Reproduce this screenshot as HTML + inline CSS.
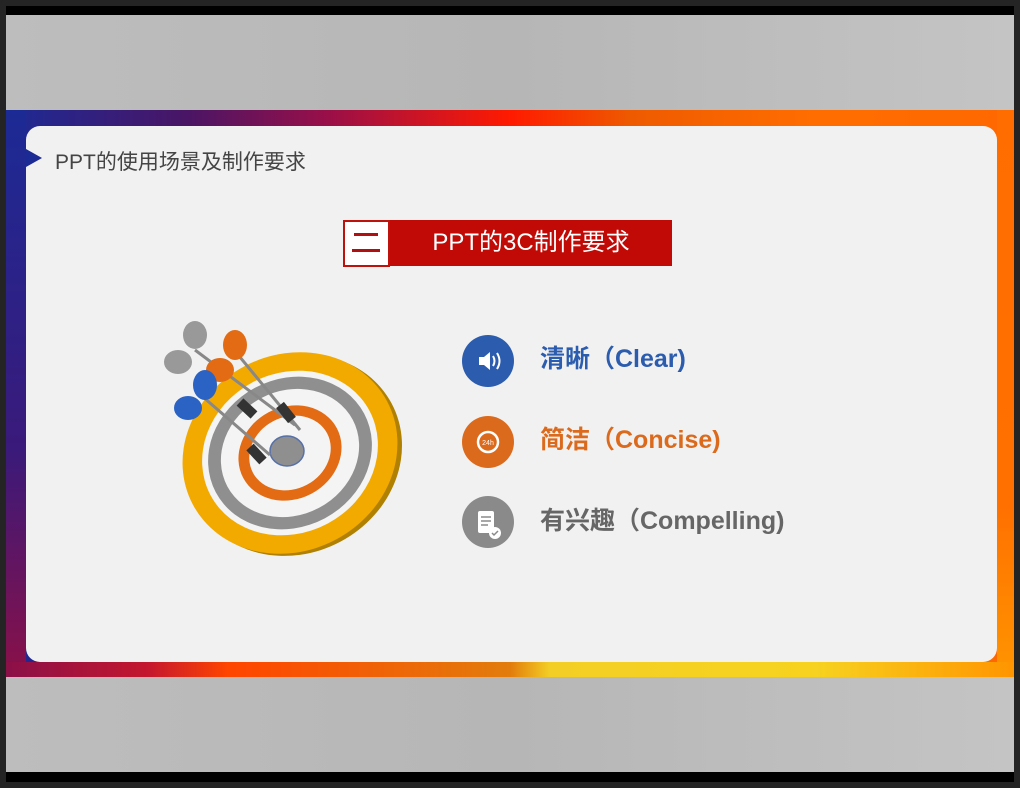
<!DOCTYPE html>
<html><head><meta charset="utf-8"><style>
body{margin:0;width:1020px;height:788px;background:#242424;position:relative;overflow:hidden;font-family:"Liberation Sans","Noto Sans CJK SC",sans-serif}
.blk{position:absolute;left:6px;width:1008px;background:#000}
.gray{position:absolute;left:6px;width:1008px;background:linear-gradient(90deg,#bdbdbd,#b6b6b6 50%,#c4c4c4)}
.slide{position:absolute;left:6px;top:110px;width:1008px;height:567px;background:linear-gradient(90deg,#1c2a95 0%,#4a1565 18%,#9a0f48 32%,#ff1a00 50%,#ee5a00 62%,#ff6d00 80%,#ff6800 100%)}
.bot{position:absolute;left:6px;top:662px;width:1008px;height:15px;background:linear-gradient(90deg,#8a1048 0%,#c4162e 14%,#ff4500 22%,#e27c0c 50%,#f3cf25 54%,#f7d320 80%,#ff9500 100%)}
.lft{position:absolute;left:6px;top:110px;width:20px;height:567px;background:linear-gradient(180deg,#1c2a95,#3a1a7a 60%,#8a1048)}
.rgt{position:absolute;left:997px;top:110px;width:17px;height:567px;background:linear-gradient(180deg,#ff6d00,#ff7000 70%,#ff9500)}
.card{position:absolute;left:26px;top:126px;width:971px;height:536px;background:#f1f1f1;border-radius:14px}
.tri{position:absolute;left:26px;top:149px;width:0;height:0;border-top:9px solid transparent;border-bottom:9px solid transparent;border-left:16px solid #1c2a95}
.t1{position:absolute;left:55px;top:146px;font-size:21px;color:#444}
.item{position:absolute;left:540px;font-size:25px;font-weight:bold}
.circ{position:absolute;left:462px;width:52px;height:52px;border-radius:50%}
</style></head><body>
<div class="blk" style="top:6px;height:9px"></div>
<div class="gray" style="top:15px;height:95px"></div>
<div class="slide"></div><div class="lft"></div><div class="rgt"></div><div class="bot"></div>
<div class="gray" style="top:677px;height:95px"></div>
<div class="blk" style="top:772px;height:10px"></div>
<div class="card"></div>
<div class="tri"></div>
<div class="t1">PPT的使用场景及制作要求</div>
<div style="position:absolute;left:343px;top:220px;width:43px;height:43px;border:2px solid #c0120c;background:#fff"></div>
<div style="position:absolute;left:354px;top:233px;width:24px;height:3px;background:#b01010"></div>
<div style="position:absolute;left:352px;top:249px;width:28px;height:3px;background:#b01010"></div>
<div style="position:absolute;left:390px;top:220px;width:282px;height:46px;background:#c10a06;color:#fff;font-size:24px;line-height:46px;text-align:center">PPT的3C制作要求</div>
<div class="circ" style="top:335px;background:#2b5cae"></div>
<div class="circ" style="top:416px;background:#dc6a1c"></div>
<div class="circ" style="top:496px;background:#8a8a8a"></div>
<svg style="position:absolute;left:462px;top:335px" width="52" height="213">
<g fill="#fff"><rect x="17" y="22" width="5" height="8"/><path d="M22 22 L28 17 L28 35 L22 30Z"/></g>
<g fill="none" stroke="#fff" stroke-width="2"><path d="M31 21 Q34 26 31 31"/><path d="M35 18 Q40 26 35 34"/></g>
<circle cx="26" cy="107" r="10" fill="none" stroke="#fff" stroke-width="2.5"/>
<text x="26" y="110" font-size="7" fill="#fff" text-anchor="middle" font-family="Liberation Sans">24h</text>
<rect x="16" y="176" width="16" height="22" rx="2" fill="#fff"/>
<g stroke="#8a8a8a" stroke-width="1.5"><line x1="19" y1="182" x2="29" y2="182"/><line x1="19" y1="186" x2="29" y2="186"/><line x1="19" y1="190" x2="26" y2="190"/></g>
<circle cx="33" cy="198" r="6" fill="#fff"/><path d="M30 198 l2 2 l4 -4" stroke="#8a8a8a" stroke-width="1.5" fill="none"/>
</svg>
<div class="item" style="top:339px;color:#2b5cae">清晰（Clear)</div>
<div class="item" style="top:420px;color:#dc6a1c">简洁（Concise)</div>
<div class="item" style="top:501px;color:#666">有兴趣（Compelling)</div>
<svg style="position:absolute;left:150px;top:310px" width="260" height="260">
<g transform="rotate(-28 140 143)">
<ellipse cx="143" cy="147" rx="110" ry="98" fill="#b08000"/>
<ellipse cx="140" cy="143" rx="110" ry="98" fill="#f3aa00"/>
<ellipse cx="140" cy="143" rx="90" ry="80" fill="#f4f4f4"/>
<ellipse cx="140" cy="143" rx="84" ry="74" fill="#8f8f8f"/>
<ellipse cx="140" cy="143" rx="71" ry="62" fill="#f4f4f4"/>
<ellipse cx="140" cy="143" rx="53" ry="46" fill="#e26b14"/>
<ellipse cx="140" cy="143" rx="42" ry="36" fill="#f4f4f4"/>
</g>
<ellipse cx="137" cy="141" rx="17" ry="15" fill="#8f8f8f" stroke="#5670a8" stroke-width="1.5"/>
<g stroke="#888" stroke-width="3"><line x1="45" y1="40" x2="145" y2="115"/><line x1="80" y1="35" x2="150" y2="120"/><line x1="45" y1="80" x2="120" y2="145"/></g>
<g stroke="#333" stroke-width="10"><line x1="90" y1="92" x2="104" y2="105"/><line x1="130" y1="95" x2="142" y2="110"/><line x1="100" y1="137" x2="113" y2="151"/></g>
<g fill="#999"><ellipse cx="45" cy="25" rx="12" ry="14"/><ellipse cx="28" cy="52" rx="14" ry="12"/></g>
<g fill="#e26b14"><ellipse cx="85" cy="35" rx="12" ry="15"/><ellipse cx="70" cy="60" rx="14" ry="12"/></g>
<g fill="#2b63c4"><ellipse cx="55" cy="75" rx="12" ry="15"/><ellipse cx="38" cy="98" rx="14" ry="12"/></g>
</svg>
</body></html>
